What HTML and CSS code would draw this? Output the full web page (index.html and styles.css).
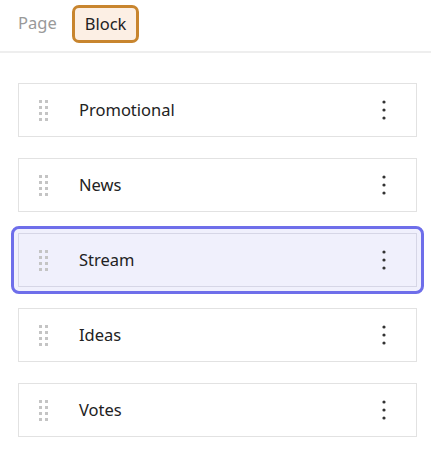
FILE: index.html
```html
<!DOCTYPE html>
<html>
<head>
<meta charset="utf-8">
<link rel="stylesheet" href="styles.css">
</head>
<body>
<div class="tabs">
  <span class="tab">Page</span>
  <span class="tab active">Block</span>
</div>
<div class="list">
  <div class="card">
    <span class="handle"><i></i><i></i><i></i><i></i><i></i><i></i><i></i><i></i></span>
    <span class="label">Promotional</span>
    <svg class="kebab" width="6" height="22" viewBox="0 0 6 22"><circle cx="3" cy="3" r="1.6"/><circle cx="3" cy="11" r="1.6"/><circle cx="3" cy="19" r="1.6"/></svg>
  </div>
  <div class="card">
    <span class="handle"><i></i><i></i><i></i><i></i><i></i><i></i><i></i><i></i></span>
    <span class="label">News</span>
    <svg class="kebab" width="6" height="22" viewBox="0 0 6 22"><circle cx="3" cy="3" r="1.6"/><circle cx="3" cy="11" r="1.6"/><circle cx="3" cy="19" r="1.6"/></svg>
  </div>
  <div class="selected-wrap">
    <div class="card selected">
      <span class="handle"><i></i><i></i><i></i><i></i><i></i><i></i><i></i><i></i></span>
      <span class="label">Stream</span>
      <svg class="kebab" width="6" height="22" viewBox="0 0 6 22"><circle cx="3" cy="3" r="1.6"/><circle cx="3" cy="11" r="1.6"/><circle cx="3" cy="19" r="1.6"/></svg>
    </div>
  </div>
  <div class="card">
    <span class="handle"><i></i><i></i><i></i><i></i><i></i><i></i><i></i><i></i></span>
    <span class="label">Ideas</span>
    <svg class="kebab" width="6" height="22" viewBox="0 0 6 22"><circle cx="3" cy="3" r="1.6"/><circle cx="3" cy="11" r="1.6"/><circle cx="3" cy="19" r="1.6"/></svg>
  </div>
  <div class="card">
    <span class="handle"><i></i><i></i><i></i><i></i><i></i><i></i><i></i><i></i></span>
    <span class="label">Votes</span>
    <svg class="kebab" width="6" height="22" viewBox="0 0 6 22"><circle cx="3" cy="3" r="1.6"/><circle cx="3" cy="11" r="1.6"/><circle cx="3" cy="19" r="1.6"/></svg>
  </div>
</div>
</body>
</html>
```
FILE: styles.css
```css
* { box-sizing: border-box; }
body {
  margin: 0;
  background: #fff;
  font-family: "Noto Sans", "Open Sans", sans-serif;
  color: #222;
}
.tabs {
  display: flex;
  align-items: flex-start;
  gap: 15px;
  height: 53px;
  padding: 5px 18px 0;
  border-bottom: 2px solid #eeeeee;
}
.tab {
  font-size: 16.5px;
  color: #999;
  line-height: 20px;
  margin-top: 8px;
}
.tab.active {
  margin-top: 0;
  color: #222;
  background: #fcefe4;
  border: 3px solid #c8852e;
  border-radius: 7px;
  padding: 6px 10px;
}
.list {
  display: flex;
  flex-direction: column;
  gap: 21px;
  padding: 30px 14px 0 18px;
}
.card {
  display: flex;
  align-items: center;
  height: 54px;
  border: 1px solid #e2e2e2;
  background: #fff;
  padding: 0 29px 0 20px;
}
.selected-wrap {
  margin: -7px -7px;
  padding: 4px;
  border: 3px solid #6e6eea;
  border-radius: 8px;
  background: #f0f0fc;
}
.card.selected {
  background: #f0f0fc;
  border-color: #d6d6e6;
}
.handle {
  display: grid;
  grid-template-columns: 3px 3px;
  grid-auto-rows: 3px;
  column-gap: 3px;
  row-gap: 3px;
  margin-top: 1px;
}
.handle i {
  display: block;
  width: 3px;
  height: 3px;
  background: #c4c4c4;
}
.label {
  flex: 1;
  margin-left: 31px;
  margin-bottom: 2px;
  font-size: 16.5px;
  color: #222;
}
.kebab {
  fill: #333;
}
```
